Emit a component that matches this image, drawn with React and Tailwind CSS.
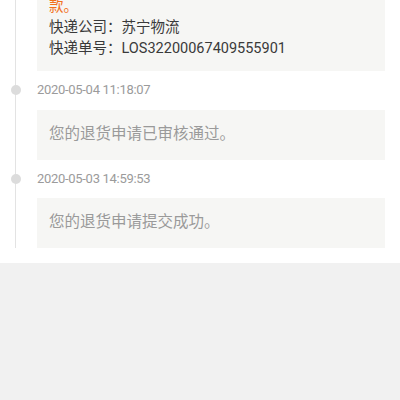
const records = [
  {
    time: "2020-05-04 11:18:07",
    text: "您的退货申请已审核通过。",
  },
  {
    time: "2020-05-03 14:59:53",
    text: "您的退货申请提交成功。",
  },
];

const TimeRow = ({ time }) => (
  <div className="relative pt-[9px] pb-[10.5px] text-[13px] leading-[19px] tracking-[-0.3px] text-[#9b9b9b]">
    <span className="absolute -left-[26px] top-1/2 -translate-y-1/2 w-[10px] h-[10px] rounded-full bg-[#dcdcdc]" />
    {time}
  </div>
);

const App = () => {
  return (
    <div
      className="min-h-[400px] bg-[#f1f1f1]"
      style={{ fontFamily: 'Roboto, "Noto Sans CJK SC", sans-serif' }}
    >
      <div className="bg-white pr-[15px] pb-[15px] overflow-hidden">
        <div className="ml-[15px] border-l border-[#e3e3e3] pl-[21px]">
          {/* last logistics record, scrolled past the top */}
          <div className="-mt-[4px] bg-[#f6f6f4] px-[12px] pb-[12px] text-[14.5px] leading-[21px]">
            <p className="text-[#f2711c]">款。</p>
            <p className="text-[#3a3a3a]">快递公司：苏宁物流</p>
            <p className="text-[#3a3a3a]">快递单号：LOS32200067409555901</p>
          </div>

          {records.map((item) => (
            <div key={item.time}>
              <TimeRow time={item.time} />
              <div className="bg-[#f6f6f4] h-[50px] px-[12px] flex items-center text-[15.5px] text-[#9a9a9a]">
                {item.text}
              </div>
            </div>
          ))}
        </div>
      </div>
    </div>
  );
};

export default App;
